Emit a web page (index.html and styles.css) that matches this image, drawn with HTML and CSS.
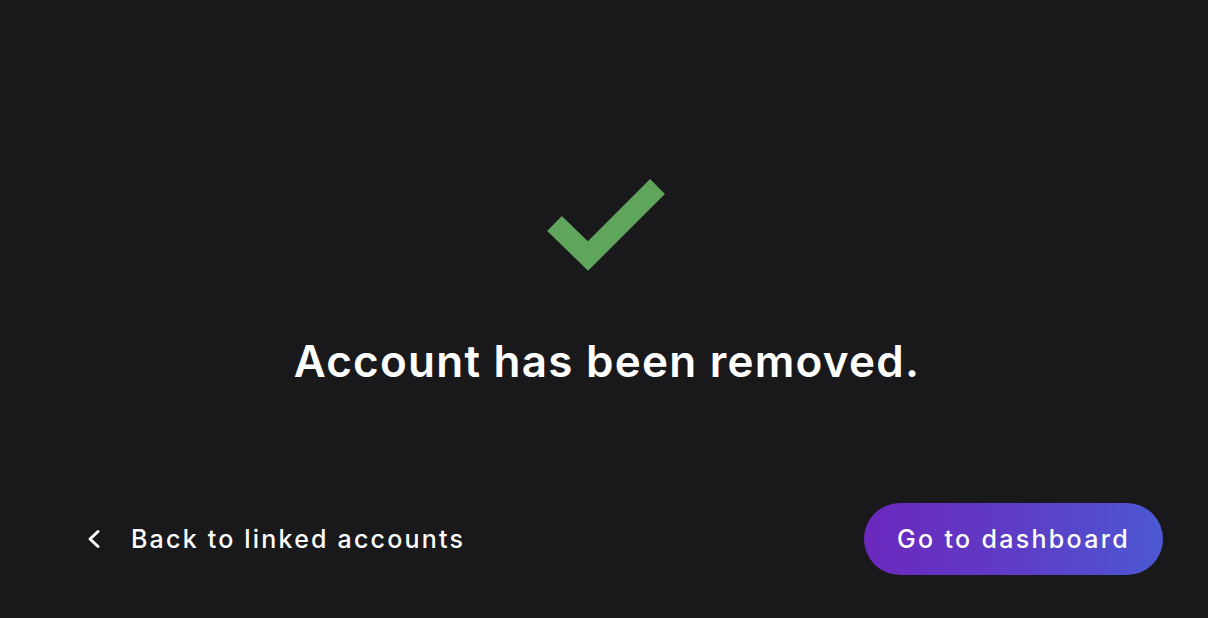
FILE: index.html
```html
<!DOCTYPE html>
<html lang="en">
<head>
<meta charset="utf-8">
<title>Account removed</title>
<link rel="stylesheet" href="styles.css">
</head>
<body>
<div class="page">
  <main class="main">
    <svg class="check" width="122" height="95" viewBox="0 0 122 95" aria-hidden="true">
      <polyline points="8.5,44.5 42,77 111.5,7.5" fill="none" stroke="#60a55c" stroke-width="21" stroke-linejoin="miter" stroke-linecap="butt"/>
    </svg>
    <h1 class="title">Account has been removed.</h1>
  </main>
  <footer class="footer">
    <a class="back" href="#">
      <svg class="chev" width="16" height="20" viewBox="0 0 16 20" aria-hidden="true">
        <polyline points="12,2.5 4,10 12,17.5" fill="none" stroke="#fff" stroke-width="3" stroke-linecap="round" stroke-linejoin="round"/>
      </svg>
      <span>Back to linked accounts</span>
    </a>
    <a class="cta" href="#">Go to dashboard</a>
  </footer>
</div>
</body>
</html>
```
FILE: styles.css
```css
html, body {
  margin: 0;
  padding: 0;
  background: #19191b;
}
body {
  font-family: Inter, "Open Sans", sans-serif;
  color: #fff;
}
.page {
  height: 618px;
  display: flex;
  flex-direction: column;
}
.main {
  flex: 1;
  display: flex;
  flex-direction: column;
  align-items: center;
  padding-top: 179px;
  padding-left: 6px;
}
.check {
  display: block;
  margin-left: 0;
}
.title {
  margin: 60px 0 0;
  font-size: 44px;
  font-weight: 600;
  letter-spacing: 1.25px;
  line-height: 54px;
}
.footer {
  display: flex;
  align-items: center;
  justify-content: space-between;
  padding: 0 45px 43px 86px;
}
.back {
  display: flex;
  align-items: center;
  gap: 29px;
  color: #fff;
  text-decoration: none;
  font-size: 25px;
  font-weight: 500;
  letter-spacing: 2.2px;
}
.chev {
  display: block;
}
.cta {
  display: flex;
  align-items: center;
  justify-content: center;
  width: 299px;
  height: 72px;
  border-radius: 36px;
  background: linear-gradient(90deg, #6c28be 0%, #5e3cc6 50%, #4c58d2 100%);
  color: #fff;
  text-decoration: none;
  font-size: 25px;
  font-weight: 500;
  letter-spacing: 2.3px;
}
```
